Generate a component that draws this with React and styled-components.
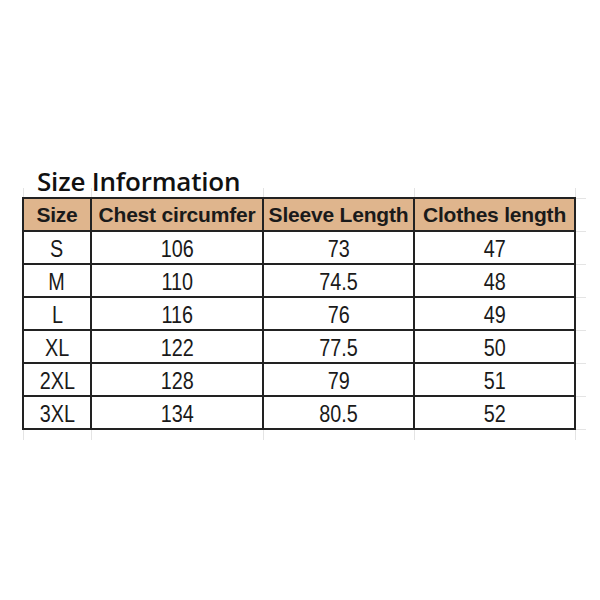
import React from "react";
import styled, { createGlobalStyle } from "styled-components";

const GlobalStyle = createGlobalStyle`
  html, body {
    margin: 0;
    padding: 0;
    background: #ffffff;
  }
`;

const Page = styled.div`
  width: 600px;
  height: 600px;
  box-sizing: border-box;
  padding: 164px 0 0 22px;
  background: #ffffff;
`;

const Title = styled.h2`
  position: relative;
  z-index: 1;
  margin: 1px 0 -9px 15px;
  font-family: "Open Sans", sans-serif;
  font-weight: 600;
  font-size: 26px;
  line-height: 32px;
  color: #111111;
  letter-spacing: -0.2px;
`;

const Table = styled.table`
  border-collapse: collapse;
  font-family: "Liberation Sans", Arial, sans-serif;
  color: #1a1a1a;
`;

const HeadCell = styled.th`
  width: ${(p) => p.w}px;
  height: 31px;
  padding: 0;
  border: 2px solid #222222;
  background: #dfb58d;
  font-size: 21px;
  font-weight: 700;
  text-align: center;
  white-space: nowrap;
  letter-spacing: -0.2px;
`;

const Cell = styled.td`
  height: 31px;
  padding: 0;
  border: 2px solid #222222;
  text-align: center;
  line-height: 1;
`;

const Value = styled.span`
  display: inline-block;
  padding-top: 3px;
  font-size: 23px;
  transform: scaleX(0.86);
`;

// faint spreadsheet gridlines poking out around the table
const GridCell = styled.td`
  height: ${(p) => p.h}px;
  padding: 0;
  border-left: 1px solid #e4e4e4;
  border-right: 1px solid #e4e4e4;
`;

const EdgeCell = styled.td`
  width: 10px;
  padding: 0;
  border-top: 1px solid #e4e4e4;
  border-bottom: 1px solid #e4e4e4;
`;

const columns = [
  { name: "Size", w: 66 },
  { name: "Chest circumfer", w: 170 },
  { name: "Sleeve Length", w: 149 },
  { name: "Clothes length", w: 159 },
];

const rows = [
  ["S", "106", "73", "47"],
  ["M", "110", "74.5", "48"],
  ["L", "116", "76", "49"],
  ["XL", "122", "77.5", "50"],
  ["2XL", "128", "79", "51"],
  ["3XL", "134", "80.5", "52"],
];

const GridRow = ({ h }) => (
  <tr>
    {columns.map((c) => (
      <GridCell key={c.name} h={h} />
    ))}
    <td />
  </tr>
);

const App = () => (
  <Page>
    <GlobalStyle />
    <Title>Size Information</Title>
    <Table>
      <thead>
        <GridRow h={9} />
        <tr>
          {columns.map((c) => (
            <HeadCell key={c.name} w={c.w}>
              {c.name}
            </HeadCell>
          ))}
          <EdgeCell />
        </tr>
      </thead>
      <tbody>
        {rows.map((r) => (
          <tr key={r[0]}>
            {r.map((v, i) => (
              <Cell key={i}>
                <Value>{v}</Value>
              </Cell>
            ))}
            <EdgeCell />
          </tr>
        ))}
        <GridRow h={10} />
      </tbody>
    </Table>
  </Page>
);

export default App;
